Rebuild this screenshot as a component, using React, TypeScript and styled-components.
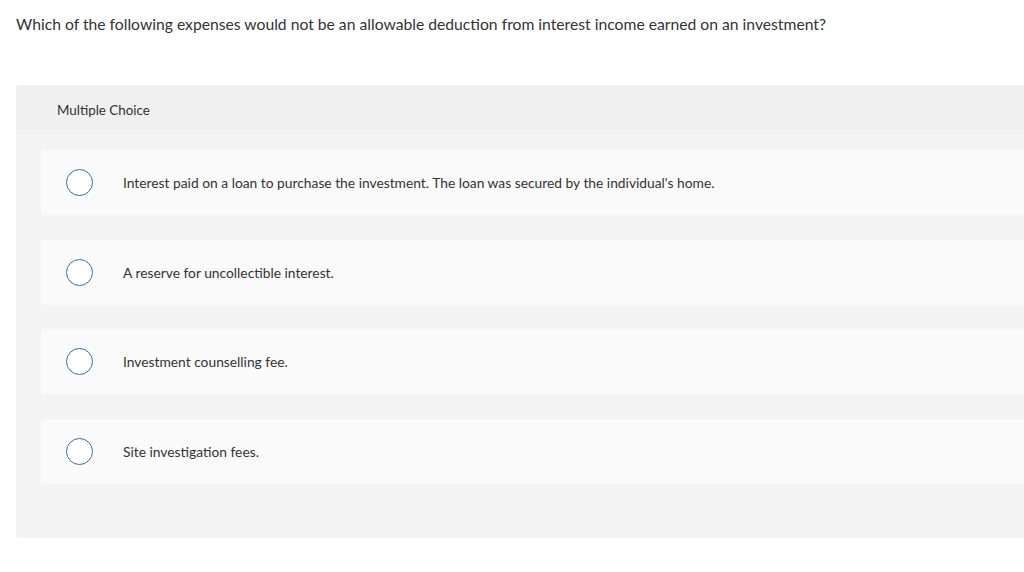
import React from 'react';
import styled, { createGlobalStyle } from 'styled-components';

const GlobalStyle = createGlobalStyle`
    html, body {
        margin: 0;
        padding: 0;
        background: #ffffff;
        overflow: hidden;
    }
    body {
        font-family: 'Lato', 'Liberation Sans', Arial, sans-serif;
        color: #333333;
    }
`;

const Page = styled.div`
    padding: 14px 0 0 16px;
    width: 1040px;
`;

const Question = styled.p`
    margin: 0;
    font-size: 15.7px;
    line-height: 20px;
    color: #333333;
`;

const Panel = styled.section`
    margin-top: 51px;
    background: #f4f4f4;
    border-radius: 3px;
    padding-bottom: 54px;
`;

const PanelHeader = styled.div`
    background: #f0f0f0;
    height: 49px;
    display: flex;
    align-items: center;
    padding-left: 41px;
    font-size: 13.4px;
    color: #333333;
    border-radius: 3px 3px 0 0;
`;

const Options = styled.div`
    display: flex;
    flex-direction: column;
    gap: 24.5px;
    padding: 16px 0 0 25px;
`;

const Option = styled.label`
    display: flex;
    align-items: center;
    height: 65px;
    background: #fafafa;
    border-radius: 3px;
    padding-left: 25px;
    cursor: pointer;
`;

const Radio = styled.span`
    width: 25px;
    height: 25px;
    border: 1.5px solid #2f6fb0;
    border-radius: 50%;
    background: #ffffff;
    flex-shrink: 0;
`;

const OptionText = styled.span`
    margin-left: 30px;
    font-size: 13.8px;
    color: #333333;
`;

const choices = [
    "Interest paid on a loan to purchase the investment. The loan was secured by the individual's home.",
    'A reserve for uncollectible interest.',
    'Investment counselling fee.',
    'Site investigation fees.',
];

const App = () => {
    return (
        <Page>
            <GlobalStyle />
            <Question>
                Which of the following expenses would not be an allowable deduction from interest income earned on an
                investment?
            </Question>
            <Panel>
                <PanelHeader>Multiple Choice</PanelHeader>
                <Options>
                    {choices.map((c) => (
                        <Option key={c}>
                            <Radio />
                            <OptionText>{c}</OptionText>
                        </Option>
                    ))}
                </Options>
            </Panel>
        </Page>
    );
};

export default App;
